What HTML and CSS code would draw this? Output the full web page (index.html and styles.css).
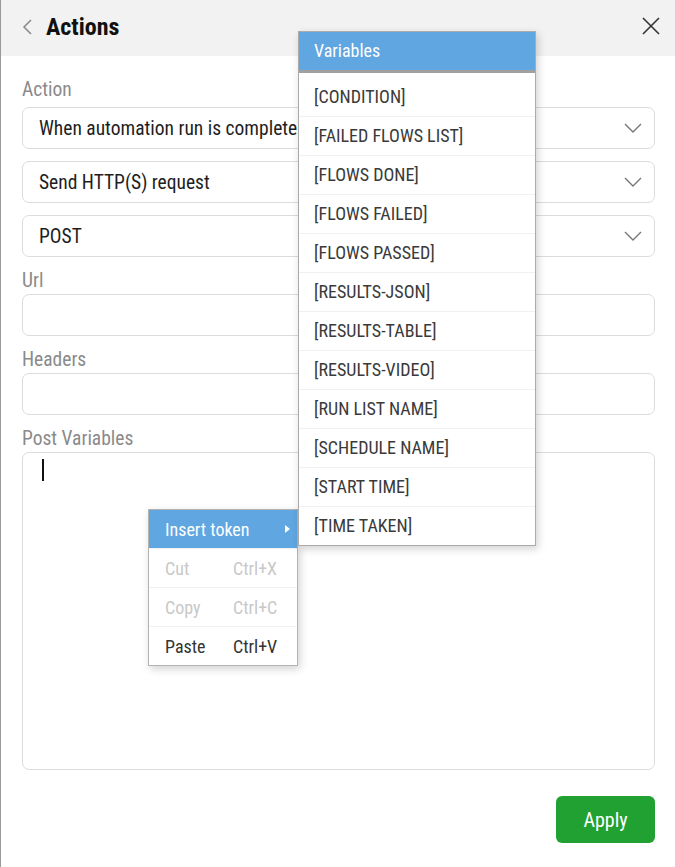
FILE: index.html
```html
<!DOCTYPE html>
<html lang="en">
<head>
    <meta charset="UTF-8">
    <meta name="viewport" content="width=device-width, initial-scale=1.0">
    <title>Actions</title>
    <link rel="stylesheet" href="styles.css">
</head>
<body>
    <div class="dialog">
        <div class="dialog-header">
            <svg class="back-icon" width="12" height="16" viewBox="0 0 12 16">
                <path d="M9 1 L2 8 L9 15" fill="none" stroke="#888" stroke-width="1.5"/>
            </svg>
            <h1>Actions</h1>
            <svg class="close-icon" width="18" height="18" viewBox="0 0 18 18">
                <path d="M1 1 L17 17 M17 1 L1 17" fill="none" stroke="#333" stroke-width="1.6"/>
            </svg>
        </div>

        <div class="dialog-body">
            <label class="field-label first">Action</label>
            <div class="select">
                <span>When automation run is complete</span>
                <svg class="chevron" width="18" height="10" viewBox="0 0 18 10"><path d="M1 1 L9 9 L17 1" fill="none" stroke="#777" stroke-width="1.4"/></svg>
            </div>
            <div class="select">
                <span>Send HTTP(S) request</span>
                <svg class="chevron" width="18" height="10" viewBox="0 0 18 10"><path d="M1 1 L9 9 L17 1" fill="none" stroke="#777" stroke-width="1.4"/></svg>
            </div>
            <div class="select">
                <span>POST</span>
                <svg class="chevron" width="18" height="10" viewBox="0 0 18 10"><path d="M1 1 L9 9 L17 1" fill="none" stroke="#777" stroke-width="1.4"/></svg>
            </div>

            <label class="field-label">Url</label>
            <div class="input"></div>

            <label class="field-label">Headers</label>
            <div class="input"></div>

            <label class="field-label">Post Variables</label>
            <div class="textarea"><span class="caret"></span></div>

            <div class="actions">
                <button class="apply-btn">Apply</button>
            </div>
        </div>

        <div class="context-menu">
            <div class="menu-item active">
                <span class="menu-label">Insert token</span>
                <span class="submenu-arrow"></span>
            </div>
            <div class="menu-item disabled">
                <span class="menu-label">Cut</span>
                <span class="shortcut">Ctrl+X</span>
            </div>
            <div class="menu-item disabled">
                <span class="menu-label">Copy</span>
                <span class="shortcut">Ctrl+C</span>
            </div>
            <div class="menu-item">
                <span class="menu-label">Paste</span>
                <span class="shortcut">Ctrl+V</span>
            </div>
        </div>

        <div class="variables-menu">
            <div class="variables-title">Variables</div>
            <ul class="variables-list">
                <li>[CONDITION]</li>
                <li>[FAILED FLOWS LIST]</li>
                <li>[FLOWS DONE]</li>
                <li>[FLOWS FAILED]</li>
                <li>[FLOWS PASSED]</li>
                <li>[RESULTS-JSON]</li>
                <li>[RESULTS-TABLE]</li>
                <li>[RESULTS-VIDEO]</li>
                <li>[RUN LIST NAME]</li>
                <li>[SCHEDULE NAME]</li>
                <li>[START TIME]</li>
                <li>[TIME TAKEN]</li>
            </ul>
        </div>
    </div>
</body>
</html>
```

FILE: styles.css
```css
body {
    margin: 0;
    font-family: "Roboto Condensed", "Liberation Sans Narrow", Roboto, sans-serif;
    background-color: #fff;
    color: #222;
}
.dialog {
    position: relative;
    width: 675px;
    height: 867px;
    box-sizing: border-box;
    border-left: 1px solid #9a9a9a;
    overflow: hidden;
}
.dialog-header {
    display: flex;
    align-items: center;
    height: 56px;
    background-color: #f2f2f2;
    padding: 0 15px 0 21px;
}
.back-icon {
    margin-right: 12px;
    margin-top: -2px;
}
.dialog-header h1 {
    flex: 1;
    margin: 0;
    font-size: 24px;
    font-weight: 700;
    color: #111;
    margin-top: -2px;
}
.close-icon {
    margin-top: -4px;
}
.dialog-body {
    padding: 0 20px 0 21px;
}
.field-label {
    display: block;
    font-size: 19.5px;
    line-height: 24px;
    color: #8a8a8a;
    margin-top: 12px;
    margin-bottom: 1px;
}
.field-label.first {
    margin-top: 22px;
    margin-bottom: 5px;
}
.select, .input {
    box-sizing: border-box;
    height: 42px;
    border: 1px solid #dcdcdc;
    border-radius: 7px;
}
.select {
    display: flex;
    align-items: center;
    justify-content: space-between;
    padding: 0 12px 0 16px;
    margin-bottom: 12px;
    font-size: 19.5px;
    color: #1e1e1e;
}
.select + .field-label {
    margin-top: 0;
}
.textarea {
    box-sizing: border-box;
    height: 318px;
    border: 1px solid #dcdcdc;
    border-radius: 7px;
    padding: 6px 0 0 19px;
}
.caret {
    display: block;
    width: 2px;
    height: 22px;
    background-color: #111;
}
.actions {
    display: flex;
    justify-content: flex-end;
    margin-top: 26px;
}
.apply-btn {
    width: 99px;
    height: 47px;
    border: none;
    border-radius: 6px;
    background-color: #21a132;
    color: #fff;
    font-family: inherit;
    font-size: 20px;
}

/* context menu over the textarea */
.context-menu {
    position: absolute;
    left: 147px;
    top: 509px;
    width: 148px;
    background-color: #fff;
    border: 1px solid #b3b3b3;
    box-shadow: 2px 3px 8px rgba(0, 0, 0, 0.18);
}
.menu-item {
    display: flex;
    align-items: center;
    height: 39px;
    box-sizing: border-box;
    padding: 0 16px;
    font-size: 18px;
    color: #333;
    border-top: 1px solid #f1f1f1;
    white-space: nowrap;
}
.menu-item:first-child {
    border-top: none;
}
.menu-label {
    min-width: 68px;
}
.menu-item.active {
    background-color: #60a6e1;
    color: #fff;
    height: 38px;
}
.menu-item.disabled {
    color: #c8c8c8;
}
.submenu-arrow {
    margin-left: auto;
    margin-right: -9px;
    width: 0;
    height: 0;
    border-top: 4px solid transparent;
    border-bottom: 4px solid transparent;
    border-left: 5px solid #fff;
}

/* variables submenu */
.variables-menu {
    position: absolute;
    left: 297px;
    top: 31px;
    width: 236px;
    background-color: #fff;
    border: 1px solid #ababab;
    box-shadow: 2px 3px 8px rgba(0, 0, 0, 0.18);
}
.variables-title {
    height: 38px;
    line-height: 38px;
    padding-left: 15px;
    background-color: #60a6e1;
    color: #fff;
    font-size: 18px;
    border-bottom: 3px solid #a0a0a0;
}
.variables-list {
    list-style: none;
    margin: 0;
    padding: 5px 0 0 0;
}
.variables-list li {
    height: 38px;
    line-height: 38px;
    padding-left: 15px;
    font-size: 18px;
    color: #3a3a3a;
    border-bottom: 1px solid #f1f1f1;
}
.variables-list li:last-child {
    border-bottom: none;
}
```
